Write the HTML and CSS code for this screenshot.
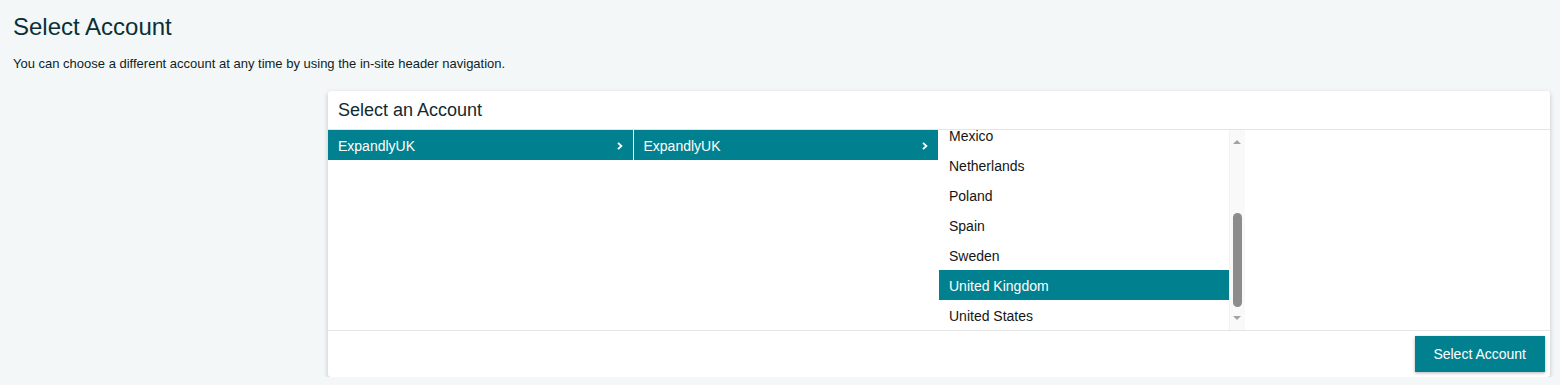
FILE: index.html
```html
<!DOCTYPE html>
<html lang="en">
<head>
<meta charset="utf-8">
<title>Select Account</title>
<link rel="stylesheet" href="styles.css">
</head>
<body>
<main class="page">
  <h1 class="page-title">Select Account</h1>
  <p class="page-sub">You can choose a different account at any time by using the in-site header navigation.</p>

  <section class="card">
    <header class="card-head">Select an Account</header>
    <div class="card-body">
      <div class="col">
        <div class="row active"><span>ExpandlyUK</span><svg class="chev" width="6" height="8" viewBox="0 0 6 8"><polyline points="1,0.8 4.4,4 1,7.2" fill="none" stroke="#fff" stroke-width="1.8"/></svg></div>
      </div>
      <div class="col">
        <div class="row active"><span>ExpandlyUK</span><svg class="chev" width="6" height="8" viewBox="0 0 6 8"><polyline points="1,0.8 4.4,4 1,7.2" fill="none" stroke="#fff" stroke-width="1.8"/></svg></div>
      </div>
      <div class="col col-list">
        <div class="list" id="countryList">
          <div class="row">Belgium</div>
          <div class="row">Canada</div>
          <div class="row">France</div>
          <div class="row">Germany</div>
          <div class="row">Italy</div>
          <div class="row">Mexico</div>
          <div class="row">Netherlands</div>
          <div class="row">Poland</div>
          <div class="row">Spain</div>
          <div class="row">Sweden</div>
          <div class="row active">United Kingdom</div>
          <div class="row">United States</div>
        </div>
        <div class="sbar">
          <div class="sbar-up"></div>
          <div class="sbar-track"><div class="sbar-thumb" style="margin-top:69px"></div></div>
          <div class="sbar-down"></div>
        </div>
      </div>
      <div class="col"></div>
    </div>
    <footer class="card-foot">
      <button class="btn" type="button">Select Account</button>
    </footer>
  </section>
</main>
<script src="script.js"></script>
</body>
</html>
```

FILE: styles.css
```css
* { box-sizing: border-box; }

html, body {
  margin: 0;
  padding: 0;
}

body {
  background: #f4f7f8;
  font-family: "Liberation Sans", Arial, sans-serif;
  color: #0b2a30;
}

.page {
  padding: 13px 10px 0 13px;
}

.page-title {
  margin: 0;
  font-size: 24px;
  line-height: 28px;
  font-weight: normal;
  color: #0a2f37;
}

.page-sub {
  margin: 15px 0 0;
  font-size: 13px;
  line-height: 16px;
  color: #0d1f24;
}

.card {
  margin: 19px 0 0 315px;
  background: #fff;
  border-radius: 3px;
  box-shadow: 0 2px 5px rgba(0, 0, 0, 0.22);
}

.card-head {
  padding: 9px 10px;
  font-size: 18px;
  line-height: 20px;
  color: #102b31;
  border-bottom: 1px solid #e4e6e6;
}

.card-body {
  display: grid;
  grid-template-columns: repeat(4, 1fr);
  height: 200px;
}

.col {
  min-width: 0;
  border-right: 1px solid #fff;
}

.row {
  display: flex;
  align-items: center;
  justify-content: space-between;
  height: 30px;
  padding: 2px 10px 0 10px;
  font-size: 14px;
  line-height: 28px;
  color: #151515;
  white-space: nowrap;
}

.row.active {
  background: #01818f;
  color: #fff;
}

.chev {
  display: block;
  margin-top: -1px;
}

.col-list {
  display: flex;
  border-right: 0;
}

.list {
  flex: 1;
  min-width: 0;
  height: 200px;
  overflow: hidden;
}

.sbar {
  width: 16px;
  height: 200px;
  display: flex;
  flex-direction: column;
  align-items: center;
  background: #f9f9f9;
  border-left: 1px solid #f2f2f2;
}

.sbar-up {
  margin-top: 10px;
  width: 0;
  height: 0;
  border-left: 4px solid transparent;
  border-right: 4px solid transparent;
  border-bottom: 4px solid #a3a3a3;
}

.sbar-track {
  flex: 1;
  width: 100%;
  display: flex;
  flex-direction: column;
  align-items: center;
}

.sbar-thumb {
  width: 9px;
  height: 94px;
  border-radius: 5px;
  background: #8c8c8c;
}

.sbar-down {
  margin-bottom: 10px;
  width: 0;
  height: 0;
  border-left: 4px solid transparent;
  border-right: 4px solid transparent;
  border-top: 4px solid #a3a3a3;
}

.card-foot {
  display: flex;
  justify-content: flex-end;
  padding: 5px;
  border-top: 1px solid #e4e6e6;
}

.btn {
  height: 36px;
  padding: 0 19px 0 18px;
  border: 0;
  border-radius: 0;
  background: #01818f;
  color: #fff;
  font-family: "Liberation Sans", Arial, sans-serif;
  font-size: 14px;
  box-shadow: 0 1px 3px rgba(0, 0, 0, 0.3);
  cursor: pointer;
}
```

FILE: script.js
```js
document.getElementById('countryList').scrollTop = 160;
```
